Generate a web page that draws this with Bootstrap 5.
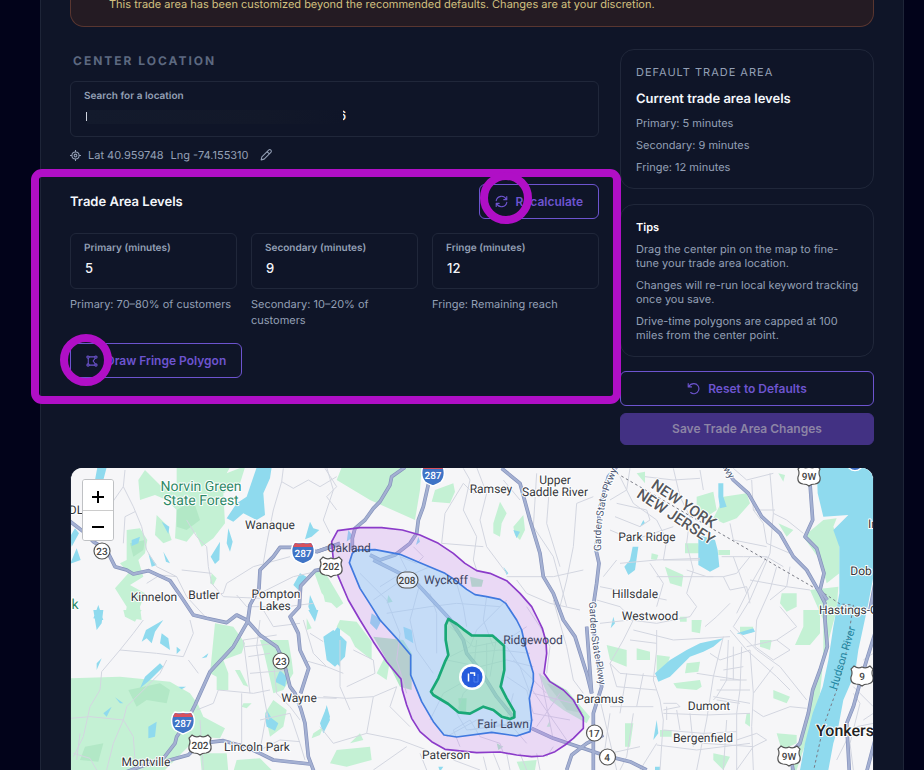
<!DOCTYPE html>
<html lang="en" data-bs-theme="dark">
<head>
<meta charset="utf-8">
<meta name="viewport" content="width=device-width, initial-scale=1">
<title>Trade Area Settings</title>
<link href="https://cdn.jsdelivr.net/npm/bootstrap@5.3.0/dist/css/bootstrap.min.css" rel="stylesheet">
<style>
:root{--panel:#0f1528;--line:#20273a;--muted:#94a0b6;--violet:#6d54cf;--mark-pink:#b00fc6}
body{background:#02031a;font-family:Inter,"Liberation Sans",sans-serif;font-size:11px;line-height:14px;color:var(--muted);text-rendering:geometricPrecision}
.shell{margin:0 20px 0 40px;background:var(--panel);border:solid #1e2538;border-width:0 1px;padding:0 29px}
.notice{background:#241b23;border:1px solid #593630;border-top:0;border-radius:0 0 14px 14px;color:#d3c180;padding:0 38px 17px;font-weight:400;line-height:9px}
.layout{display:grid;grid-template-columns:minmax(0,1fr) 254px;column-gap:21px;padding-top:22px;padding-bottom:23px}
.eyebrow{font-size:12px;line-height:14px;font-weight:700;letter-spacing:2px;color:#5d6980;margin:5px 0 13px 3px}
.field{border:1px solid var(--line);border-radius:6px;padding:7px 13px 0;height:56px}
.field label{display:block;font-size:10px;line-height:14px;font-weight:600}
.field input{font-size:13px;line-height:18px;font-weight:500;color:#f3f5fa;padding:0 0 0 1px;height:18px;margin-top:4px;min-height:0;border:0;background:none}
.field input:focus{outline:1px solid var(--violet)}
.masked{position:relative}
.smudge{position:absolute;left:2px;top:3px;width:257px;height:14px;border-left:1px solid #cfd4df;border-image:linear-gradient(transparent 20%,#cfd4df 20%,#cfd4df 75%,transparent 75%) 1;background:linear-gradient(90deg,#131a2c,#121829 70%,var(--panel));z-index:1}
.remnant{position:absolute;left:254px;top:0;font-size:13px;line-height:18px;font-weight:500;color:#f3f5fa}
.coords{margin:11px 0 22px;gap:7px}
.levels{position:relative}
.heading{font-size:13px;line-height:16px;font-weight:600;color:#f4f6fb}
.btn-violet{--bs-btn-color:var(--violet);--bs-btn-border-color:var(--violet);--bs-btn-hover-bg:#1d1a45;--bs-btn-hover-color:#8d78e6;--bs-btn-hover-border-color:#8d78e6;--bs-btn-font-size:12px;--bs-btn-font-weight:600;--bs-btn-line-height:19px;--bs-btn-padding-y:7px;--bs-btn-padding-x:15px;--bs-btn-border-radius:6px;display:inline-flex;align-items:center;justify-content:center;position:relative}
.btn-save{--bs-btn-disabled-bg:#423183;--bs-btn-disabled-color:#8c84a5;--bs-btn-disabled-border-color:#423183;--bs-btn-disabled-opacity:1;--bs-btn-font-size:12px;--bs-btn-font-weight:600;--bs-btn-line-height:18px;--bs-btn-padding-y:6px;--bs-btn-border-radius:6px}
.reset{margin:14px 0 7px}
.fields{display:grid;grid-template-columns:repeat(3,minmax(0,1fr));gap:14px;margin:14px 0 15px}
.hint{line-height:16px;margin:7px 0 0}
.ring-box{position:absolute;inset:-15px -22px -26px -39px;border:8px solid var(--mark-pink);border-radius:11px;pointer-events:none;z-index:2}
.ring-dot{position:absolute;width:52px;height:52px;border:8px solid var(--mark-pink);border-radius:50%;left:0;top:-13px;pointer-events:none;z-index:3}
.ring-draw{left:-11px;top:-10px}
.side{border:1px solid var(--line);border-radius:14px;padding:15px 12px 14px 15px}
.side+.side{margin-top:15px}
.side p{margin:0 0 8px}
.side .heading{margin-bottom:9px}
.side p:last-child{margin:0}
.side .over{letter-spacing:1px;margin-bottom:12px}
.map{height:302px;border-radius:12px 12px 0 0;overflow:hidden;background:#f6f6f8;position:relative;border:solid #1b2234;border-width:0 1px}
.map svg.canvas{display:block;width:100%;height:100%}
.zoomer{position:absolute;left:11px;top:11px;border:1px solid #bfc1c4;border-radius:3px;overflow:hidden}
.zoomer button{display:block;width:30px;height:30px;border:0;background:#fff;color:#000;padding:0}
.zoomer button+button{border-top:1px solid #ccc}
.park{fill:#c4f1d4}.park2{fill:#b2e8c6}.lake{fill:#8fdaee}
.minor{fill:none;stroke:#d3d6e0;stroke-width:3}
.casing{fill:none;stroke:#8592bb;stroke-width:11;stroke-linejoin:round}
.fillway{fill:none;stroke:#a4b0d2;stroke-width:7;stroke-linejoin:round}
.place{font-family:Roboto,sans-serif;font-size:12px;fill:#34363b;paint-order:stroke;stroke:#fff;stroke-width:2px;stroke-linejoin:round;text-anchor:middle}
.place .wood{fill:#2f8a68;font-size:14px}
.place .state{font-size:15px;font-weight:500;fill:#55575c}
.place .road{font-size:10px;fill:#4d5874;text-anchor:start}
.place .river{font-size:11px;fill:#2387a3;stroke:none}
.place .city{font-size:16px;font-weight:500;fill:#222}
.place .in{stroke:none;fill:#3d4360}
.num{font-family:Roboto,sans-serif;font-size:10px;font-weight:500;fill:#444;text-anchor:middle}
</style>
<script src="https://cdn.jsdelivr.net/npm/bootstrap@5.3.0/dist/js/bootstrap.bundle.min.js"></script>
</head>
<body>
<main class="shell">
  <div class="notice" role="status">This trade area has been customized beyond the recommended defaults. Changes are at your discretion.</div>

  <div class="layout">
    <section>
      <h2 class="eyebrow">CENTER LOCATION</h2>
      <div class="field">
        <label for="loc">Search for a location</label>
        <div class="masked"><input id="loc" class="form-control" type="text"><span class="remnant">6</span><span class="smudge"></span></div>
      </div>
      <div class="coords d-flex align-items-center">
        <svg width="11" height="11" viewBox="0 0 16 16" fill="none" stroke="currentColor" stroke-width="1.5"><circle cx="8" cy="8" r="5.2"/><circle cx="8" cy="8" r="2"/><path d="M8 0v3M8 13v3M0 8h3M13 8h3"/></svg>
        <span>Lat 40.959748</span><span>Lng -74.155310</span>
        <svg class="ms-1" width="12" height="12" viewBox="0 0 16 16" fill="none" stroke="currentColor" stroke-width="1.4" stroke-linejoin="round"><path d="M1.5 14.5l1-4L11.500 1.500a1.800 1.800 0 0 1 3 3L5.500 13.500zM9.500 3.500l3 3"/></svg>
      </div>

      <div class="levels">
        <div class="d-flex justify-content-between align-items-center">
          <h3 class="heading m-0">Trade Area Levels</h3>
          <button class="btn btn-violet gap-2" type="button">
            <svg width="13" height="13" viewBox="0 0 16 16" fill="none" stroke="currentColor" stroke-width="1.400" stroke-linecap="round" stroke-linejoin="round"><path d="M1.500 7A6.600 6.600 0 0 1 14 5.500M14.500 9A6.600 6.600 0 0 1 2 10.500M14.500 2v3.700h-3.700M1.500 14v-3.700h3.700"/></svg>
            Recalculate<span class="ring-dot"></span></button>
        </div>
        <div class="fields">
          <div><div class="field"><label for="p1">Primary (minutes)</label><input id="p1" class="form-control" type="text" value="5"></div><p class="hint">Primary: 70–80% of customers</p></div>
          <div><div class="field"><label for="p2">Secondary (minutes)</label><input id="p2" class="form-control" type="text" value="9"></div><p class="hint">Secondary: 10–20% of customers</p></div>
          <div><div class="field"><label for="p3">Fringe (minutes)</label><input id="p3" class="form-control" type="text" value="12"></div><p class="hint">Fringe: Remaining reach</p></div>
        </div>
        <button class="btn btn-violet gap-2" type="button">
          <svg width="12" height="12" viewBox="0 0 16 16" fill="none" stroke="currentColor" stroke-width="1.400"><path d="M3 4v8M4 2.500h8M4 13.500h8M12.500 4L9.500 8l3 4"/><circle cx="2.700" cy="2.700" r="1.500"/><circle cx="13.300" cy="2.700" r="1.500"/><circle cx="2.700" cy="13.300" r="1.500"/><circle cx="13.300" cy="13.300" r="1.500"/></svg>
          Draw Fringe Polygon<span class="ring-dot ring-draw"></span></button>
        <div class="ring-box"></div>
      </div>
    </section>

    <aside>
      <div class="side">
        <p class="over">DEFAULT TRADE AREA</p>
        <h3 class="heading">Current trade area levels</h3>
        <p>Primary: 5 minutes</p><p>Secondary: 9 minutes</p><p>Fringe: 12 minutes</p>
      </div>
      <div class="side">
        <p class="text-white fw-semibold">Tips</p>
        <p>Drag the center pin on the map to fine-tune your trade area location.</p>
        <p>Changes will re-run local keyword tracking once you save.</p>
        <p>Drive-time polygons are capped at 100 miles from the center point.</p>
      </div>
      <button class="btn btn-violet reset w-100 gap-2" type="button">
        <svg width="13" height="13" viewBox="0 0 16 16" fill="none" stroke="currentColor" stroke-width="1.400" stroke-linecap="round" stroke-linejoin="round"><path d="M1.500 2v4h4M1.800 5.800C3.500 3.200 6 2 8.500 2a6.200 6.200 0 1 1-4 11"/></svg>
        Reset to Defaults</button>
      <button class="btn btn-save w-100" type="button" disabled>Save Trade Area Changes</button>
    </aside>
  </div>

  <div class="map">
    <svg class="canvas" viewBox="71 468 802 302" preserveAspectRatio="xMinYMin slice" role="img" aria-label="Drive-time map of the trade area">
      <defs>
        <g id="ways">
          <g transform="translate(60 460) scale(.33333)">
            <path d="M25 180L70 215 100 245 140 270 165 320 200 330 220 342 265 332 330 362 360 405 400 465 440 475 500 488 530 465 560 480 600 525 650 560 670 600 690 680 705 700 722 745 735 790 745 890 762 935"/>
            <path d="M840 250L770 275 720 262 660 262 640 290 600 330 597 385 570 435 563 485 520 560 450 635 405 735 380 785 350 830 345 850 310 895 200 935"/>
            <path d="M800 325L765 332 722 378 718 440 690 470 715 520 720 570 746 625 722 700"/>
            <path d="M440 848L490 842 560 862 600 880 640 900 750 912M250 915L330 900 385 885 400 870"/>
          </g>
          <g transform="translate(320 460) scale(.33333)">
            <path d="M255 22L215 50 210 75 180 125 160 145 135 180 105 205 97 235 97 270M-10 275L50 255"/>
            <path d="M328 60L310 140 295 180 290 220 270 250 225 285 180 300 150 285M160 300L240 340 290 370 390 478 430 540 440 580 480 630 530 710 583 775M635 805L700 835 760 855 850 885"/>
            <path d="M545 25L600 70 630 180 660 280 670 350 700 400 730 480 765 530 800 640 815 700"/>
            <path d="M740 930L755 885 800 850 850 825"/>
          </g>
          <g transform="translate(590 460) scale(.33333)">
            <path d="M80 20L55 50 30 140 18 270 27 310 20 370 8 450 15 550 30 640 35 680 10 760 10 930M-10 500L5 700M60 890L120 905 170 930"/>
            <path d="M400 15L430 60 475 100 515 170 570 220 610 290 650 330 690 400 705 430 705 480 712 560 690 630 668 690 655 760 630 850 600 880 610 935"/>
            <path d="M660 70L668 180 645 230 680 265 702 340 690 390 712 420"/>
            <path d="M855 520L830 600 815 650 790 740 770 790 778 935M855 840L830 935M855 370L840 450"/>
          </g>
        </g>
        <g id="interstate"><path d="M-8 -10C-4 -9-3 -9 0 -10C3 -9 4 -9 8 -10C13 -5 12 4 8 8C5 10 2 11 0 12C-2 11-5 10-8 8C-12 4-13 -5-8 -10Z" fill="#3f74c6" stroke="#fff" stroke-width="1.500"/><path d="M-8 -9C-4 -8-3 -8 0 -9C3 -8 4 -8 8 -9L10 -5H-10Z" fill="#d8525e"/></g>
        <path id="usroute" d="M-8 -10Q-4 -7 0 -9Q4 -7 8 -10L11 -7Q9 -3 11 1Q12 7 6 8Q2 8 0 10Q-2 8-6 8Q-12 7-11 1Q-9 -3-11 -7Z" fill="#fff" stroke="#555" stroke-width="1.200"/>
        <path id="gsp1" d="M601 551L601 530 606 498 617 470"/>
        <path id="gsp2" d="M589 602L591 635 600 690"/>
      </defs>
      <rect x="71" y="468" width="802" height="302" fill="#f6f6f8"/>

      <g transform="translate(60 460) scale(.33333)">
        <path class="park" d="M235 60L255 30 300 75 350 90 350 22H555L540 70 490 100 495 190 460 235 425 260 405 215 380 245 345 235 350 150 320 120 285 105 240 120ZM545 22H510L500 40ZM290 165L320 195 335 240 310 250 285 225ZM200 210L240 205 262 240 255 280 235 300 250 350 210 375 255 400 240 440 245 480 195 470 200 440 165 385 205 340 180 310 200 300ZM455 340L470 355 460 375 450 370ZM760 330L800 345 850 430 830 445 785 400ZM190 450H245L225 485 195 470ZM30 655L180 650 330 665 390 700 415 735 430 770 495 805 480 835 415 830 380 865 310 935H30ZM465 490L520 500 555 550 545 580 490 600 505 640 505 690 470 690 470 650 450 640ZM525 630L540 630 565 680 550 675ZM600 540L685 540 695 600 700 640 670 690 640 700 610 570ZM550 730L575 730 560 745 545 740ZM640 720L680 750 670 800 630 830 615 760ZM760 820L790 800 780 825 755 835ZM420 880L500 880 505 935H425ZM530 900L600 895 640 935H520ZM740 475L755 505 740 510Z"/>
        <path class="park2" d="M350 150L400 120 420 180 380 210 350 200ZM210 250L255 240 250 270 220 290ZM205 690L300 670 330 690 320 730 260 720 230 740ZM75 860L130 850 115 905 60 900Z"/>
        <path class="lake" d="M112 22H140L130 60 105 60ZM590 22H635L630 55 610 100 615 165 590 180 550 160 520 185 500 175 530 130 560 110ZM750 185L760 205 778 210 755 230 735 238ZM480 245L478 300 465 312 452 290ZM505 205L518 245 510 275 500 250ZM305 185L328 200 325 222ZM215 240L240 230 235 250 215 258ZM265 280L290 315 275 320ZM310 275L330 310 318 305ZM45 205L57 220 35 260 30 230ZM50 265L62 300 30 312ZM115 435L130 480 100 475ZM750 405L770 450 760 475 745 440ZM720 340L740 350 715 390 700 375ZM100 450H130L125 490 110 510ZM310 480L285 515 275 550 260 535 245 545 258 510ZM305 520L325 535 330 570 300 550ZM125 595L110 630 110 610ZM300 610L310 620 270 660 240 685 255 650ZM350 560L362 570 350 582ZM355 680L378 680 365 688ZM155 740L140 770 130 760ZM290 785L285 830 265 835 265 800ZM165 712L190 730 180 730ZM660 630L680 650 675 680 645 665ZM620 750L635 775 655 790 645 812 620 800 615 770ZM800 735L810 770 795 800 785 800ZM840 490V620L800 580 805 540ZM745 450H775L765 485ZM425 595L445 580 440 592Z"/>
        <path class="minor" d="M195 30L190 80 220 140 245 200 260 270 290 320 350 350 380 410 440 475M190 80L155 130 120 180 110 240M190 250L195 170 225 155M380 180L410 230 440 260 445 320 455 370 490 410 600 415M670 25L665 65 700 85 745 60 780 80 830 50M665 65L640 150 620 250 610 310M795 25L830 80 800 110 830 150M350 350L300 345 260 370M455 340L365 330M390 410L490 400 500 370 580 320 690 290M600 400L700 350 790 330M530 405L560 440 680 440 760 430M250 480L220 520 180 570 125 635 120 690 90 740 70 830 40 890M180 570L290 580 370 590 400 520 390 480M190 780L200 740 250 690 300 640 320 600M30 775L90 770 190 780 220 830 225 900 250 930M190 780L160 850 140 930M40 880L90 895 110 930M410 750L460 730 475 690 580 700 630 690M550 540L570 700M550 540L650 525M565 590L630 580M555 560L650 550M570 640L690 630M600 480L590 560 610 700 625 780M640 600L650 700 690 740 720 780M545 700L545 850 510 860M420 780L430 930M415 640L385 600M600 780L690 760 720 850 735 900M730 600L800 620 850 640M730 480L760 580 800 620M750 520L790 545M610 450L640 500 720 490M620 760L600 870 660 840 720 845M60 820L50 900M690 710L830 715"/>
      </g>

      <g transform="translate(320 460) scale(.33333)">
        <path class="park" d="M65 22H305L300 90 285 180 150 120 50 60ZM345 90L400 70 405 95 390 130 335 125ZM540 125L560 160 545 190 540 230 520 220 520 190ZM580 200L610 165 615 210 600 240 585 225ZM0 360L25 370 40 430 15 425ZM60 480L110 485 155 545 155 600 105 560 90 530 50 500ZM195 590L210 600 200 660 170 640ZM655 640L740 690 810 770 800 790 730 750 690 720ZM120 820L130 840 90 850ZM50 870L150 860 155 900 80 920 30 910ZM690 780L680 800 690 800ZM590 905L650 900 645 930 600 930Z"/>
        <path class="park2" d="M450 350L490 360 485 380 455 380ZM160 530L250 540 275 580 275 690 240 680 200 600ZM205 405L218 425 200 430ZM415 715L440 715 438 755 418 755ZM530 850L550 860 535 870ZM680 670L740 690 790 760 740 750Z"/>
        <path class="lake" d="M85 210L100 230 80 245ZM580 210L600 215 590 235ZM295 230L288 255 300 245ZM10 530L40 510 65 530 80 545 75 590 45 620 20 600ZM155 460L185 480 170 510 150 490ZM250 500L275 510 280 550 255 535ZM20 740L30 780 10 820 0 790ZM355 920L370 920 360 935ZM550 320L565 340 560 345Z"/>
        <path class="minor" d="M20 22L40 90 10 180 30 220M470 22L500 100 480 180 500 260 560 340M375 160L430 70 460 100 500 90M375 160L365 250 490 260M430 25L450 60 430 150 470 230 460 300 470 330M600 120L550 60M650 40L640 200 700 290 740 440M690 60L680 190 720 320M820 110L770 130 760 260 740 360 720 440M560 350L700 350 790 330M590 360L620 400 690 430 780 450M120 340L200 420 240 520 230 600 260 700M160 420L260 350 330 320M240 290L260 330 180 380M280 260L310 290 290 310 240 290M200 460L330 440 410 430 540 440M300 370L270 480 290 570 340 640M330 400L350 460 350 580M410 370L430 440 440 500M560 420L470 510 450 560 390 590M500 410L490 480 520 560M390 500L460 560 560 540 620 500M440 580L540 570 630 580M380 600L480 620 560 600 640 620M440 660L370 700 330 780M480 650L430 700 410 760 440 810 520 800 620 790M470 540L460 640M500 550L500 670M530 530L510 650M560 560L600 620 630 700M620 440L660 500 690 560 680 640M700 420L740 560 760 660 790 700M560 650L620 690 640 760 750 780M640 700L760 730M650 800L720 700M630 680L740 840M660 640L700 840M580 700L560 780 620 850M380 830L470 780 630 810M420 860L400 810 450 780 480 830 540 850 550 880M450 810L640 780M490 890L500 930M520 880L540 930M560 880L570 930M600 880L620 930M650 880L660 930M10 710L80 715 160 710 230 680M60 540L60 680 90 750M100 570L160 600 165 640 80 680M160 710L140 820 240 840 320 870M140 820L40 850 0 800M230 680L210 740 270 800M300 880L320 930M400 900L480 930M260 860L160 930M680 890L700 860M580 600L680 700"/>
      </g>

      <g transform="translate(590 460) scale(.33333)">
        <path class="park" d="M320 110L370 95 380 150 350 170 320 150ZM400 110L470 100 480 130 440 175 400 190 370 175 385 145ZM140 40L165 35 165 70ZM565 40L585 45 580 65ZM565 190L610 210 590 230ZM640 230L700 180 740 175 730 200 748 250 748 340 710 370 690 300ZM285 250L325 250 330 280 285 280ZM385 270H420V285H385ZM225 320L280 345 275 380 240 370ZM185 280L205 285 200 300 183 298ZM575 400L620 400 620 440 590 455 570 430ZM660 390L745 380 740 450 700 600 690 700 650 840 620 930 600 930 640 830 660 740 700 580 700 480ZM640 450H690L690 520 660 555 615 555 640 500ZM305 480L335 480 330 520 305 515ZM50 555L110 570 110 620 60 600ZM140 565L180 575 180 600 140 600ZM200 585L240 590 230 620 200 640ZM290 610L330 605 325 635 285 640ZM450 500L490 500 485 518 450 520ZM510 540L545 540 540 570 510 560ZM550 690L600 710 590 730 550 715ZM250 670L330 660 335 680 320 690 260 685ZM105 790L130 790 120 860 105 860ZM470 760H480V800L465 790ZM560 820L620 825 620 850 575 870ZM370 880L420 890 400 930 370 900ZM210 810H245V830H210ZM270 470H290V485H270Z"/>
        <path class="lake" d="M680 22H850V350L835 430 820 500 805 570 795 640 760 720 745 800 730 850 715 930H630L645 850 668 760 698 680 715 600 730 500 748 400V260L730 210 775 165 700 170 683 100ZM385 70H400V110L410 140 390 145 385 110ZM325 225L375 240 383 270 388 320 360 335 325 315ZM128 260L145 260 135 330 115 345 103 320 120 300ZM160 180L165 190 150 200ZM70 470L75 490 62 505ZM195 640L240 600 290 570 330 550 350 545 400 535 370 560 340 575 300 590 270 620 240 650 205 665ZM440 520L490 505 495 515 460 525ZM200 780L205 820 190 840ZM195 920H210V930H195Z"/>
        <path class="minor" d="M90 50L130 130 200 180M120 25L110 90 60 120M165 50L250 60 330 55M250 25L270 110 300 170M330 30L340 90M75 170L150 200 180 180 170 150 80 130M200 180L230 240 220 300 330 300M60 210L130 240 250 200M300 170L290 250 310 330M430 25L470 60 550 40M485 60L490 150 520 190 530 250 600 280M540 40L550 160 540 280 480 420 430 500M555 150L490 150M550 160L590 180 640 220M420 190L430 240 530 260M395 290L460 290 530 290 580 320M290 330L350 350 400 350 440 340 480 290M80 300L40 350M90 310L200 300 330 295M180 310L220 370 200 440M30 380L130 400 230 420M200 350L370 350M310 330L290 400 320 440 300 470M400 350L420 390 470 380 480 430M530 290L490 360 440 460M560 320L540 390 500 480M600 320L590 380 540 420M430 290L470 400M480 360L590 380 660 390M345 500L380 470 420 430M20 420L90 440 130 480 100 540 60 610 80 680M30 490L120 480 200 490 300 470M130 510L250 540 420 530M200 510L200 570 190 660 210 720 220 780 210 930M60 610L90 640 200 650M80 680L200 690M120 540L200 550M60 740L190 740M30 720L80 930M110 640L90 760M160 640L140 740M220 730H260L270 740 220 750M220 760L350 765 480 760M220 810L340 820 440 815M230 740L230 780M260 750L270 810M300 760L310 860M200 855L320 870 480 850M400 530L370 650 350 780 320 930M415 540L410 660 380 710 370 720M430 560V660M455 560L450 690 440 760 440 930M320 640L450 660M380 690L480 690M390 660H470M400 630L460 620M380 720L450 730M360 580L390 600 480 570M480 570L490 700 485 800 490 930M430 500L500 570 570 620 650 720M420 510L470 570 560 650 600 690M500 480L495 560 550 600 600 570 560 540 470 560M570 440L620 500 560 540M490 700L550 620M370 710L480 730M490 750L520 770 600 740 650 745M440 840L500 820 530 840 490 860 440 930M340 850L490 860M410 780L400 930M150 930L200 850M130 760L110 890 90 930M150 860L60 880M60 760L40 900M790 700L810 730 780 850 790 930M820 780L850 760M790 680L850 740M800 800L850 790M820 600L850 580M740 900L780 820"/>
        <path d="M80 40L710 405 750 432 790 435 780 500 765 600 740 690 700 800 670 935" fill="none" stroke="#787a85" stroke-width="3" stroke-dasharray="8 8"/>
        <circle cx="795" cy="8" r="24" fill="#3f6fc4" stroke="#fff" stroke-width="4"/>
      </g>

      <use href="#ways" class="casing"/><use href="#ways" class="fillway"/>

      <g transform="translate(320 460) scale(.33333)" stroke-linejoin="round">
        <path d="M53 212L120 203 185 203 247 210 300 225 355 250 400 280 435 310 470 332 510 340 560 362 600 400 635 440 655 480 667 505 678 545 680 580 672 640 690 665 730 690 760 720 790 772 790 805 760 835 735 855 705 875 670 888 635 890 590 885 540 876 470 878 375 868 335 845 300 815 275 775 260 735 247 690 243 657 200 605 160 545 120 480 85 420 55 350 40 300 35 245Z" fill="#c57ff0" fill-opacity=".24" stroke="#8b3bc9" stroke-width="5"/>
        <path d="M108 270L165 269 240 283 300 308 375 340 405 360 440 388 465 404 500 410 540 418 557 430 590 480 605 510 615 555 640 640 640 665 628 715 635 780 630 815 590 828 515 817 410 831 372 825 340 785 305 725 272 645 272 585 230 535 180 480 155 440 120 385 88 308 97 280Z" fill="#8fe2fb" fill-opacity=".4" stroke="#4079df" stroke-width="5"/>
        <path d="M385 477L410 492 430 508 455 526 518 527 552 557 553 630 542 680 560 715 583 755 583 772 570 777 545 770 520 750 490 740 450 761 415 757 385 732 340 705 333 695 355 655 375 605 385 585 377 540 377 495Z" fill="#86e88f" fill-opacity=".38" stroke="#19a877" stroke-width="8"/>
      </g>

      <use href="#interstate" x="433" y="474"/><use href="#interstate" x="303" y="552"/><use href="#interstate" x="183" y="722"/>
      <use href="#usroute" x="331" y="567"/><use href="#usroute" x="200" y="745"/><use href="#usroute" x="809" y="476"/><use href="#usroute" x="789" y="756"/><use href="#usroute" x="862" y="676"/>
      <g fill="#fff" stroke="#555" stroke-width="1.200"><circle cx="102" cy="551" r="8"/><circle cx="281" cy="661" r="8"/><rect x="397" y="572" width="21" height="16" rx="8" fill="#e3edfa"/><circle cx="594.500" cy="733" r="8"/><circle cx="607.500" cy="757" r="8"/></g>
      <g class="num">
        <g fill="#fff"><text x="433" y="479">287</text><text x="303" y="557">287</text><text x="183" y="727">287</text></g>
        <text x="331" y="570">202</text><text x="200" y="749">202</text><text x="809" y="480">9W</text><text x="789" y="760">9W</text><text x="862" y="680">9</text>
        <text x="102" y="555">23</text><text x="281" y="665">23</text><text x="407" y="584">208</text><text x="594" y="737">17</text><text x="607" y="761">4</text>
      </g>

      <g class="place">
        <text class="wood" x="201" y="491">Norvin Green</text><text class="wood" x="201" y="505">State Forest</text><text class="wood" x="75" y="609">k</text>
        <text x="76" y="514">DL</text><text x="270" y="529">Wanaque</text><text x="154" y="601">Kinnelon</text><text x="204" y="599">Butler</text>
        <text x="276" y="598">Pompton</text><text x="275" y="610">Lakes</text><text x="299" y="702">Wayne</text><text x="257" y="751">Lincoln Park</text><text x="146" y="766">Montville</text>
        <text class="in" x="349" y="552">Oakland</text><text class="in" x="446" y="584">Wyckoff</text><text class="in" x="533" y="644">Ridgewood</text><text class="in" x="503" y="728">Fair Lawn</text>
        <text x="446" y="759">Paterson</text><text x="491" y="493">Ramsey</text><text x="555" y="484">Upper</text><text x="555" y="496">Saddle River</text>
        <text x="647" y="541">Park Ridge</text><text x="635" y="598">Hillsdale</text><text x="650" y="620">Westwood</text><text x="600" y="703">Paramus</text><text x="709" y="710">Dumont</text><text x="703" y="742">Bergenfield</text>
        <text x="873" y="528">In</text><text x="861" y="575">Dob</text><text x="819" y="614" style="text-anchor:start">Hastings-O</text>
        <text class="city" x="845" y="736">Yonkers</text>
        <text class="state" transform="translate(681 508) rotate(34)">NEW YORK</text><text class="state" transform="translate(673 521) rotate(33)">NEW JERSEY</text>
        <text class="road"><textPath href="#gsp1">Garden State Pkwy</textPath></text><text class="road"><textPath href="#gsp2">Garden State Pkwy</textPath></text>
        <text class="road" transform="translate(723 469) rotate(58)">wy</text>
        <text class="river" transform="translate(846 659) rotate(-73)">Hudson River</text>
      </g>

      <circle cx="472" cy="677" r="13" fill="#fff"/><circle cx="472" cy="677" r="10.500" fill="#265bdc"/>
      <path d="M468.500 681.500V673.500M470 673H474.500V676" fill="none" stroke="#fff" stroke-width="1.500"/><path d="M474 677V682H478V674" fill="none" stroke="#4c80ee" stroke-width="1"/>
    </svg>
    <div class="zoomer">
      <button type="button" aria-label="Zoom in"><svg width="14" height="14" viewBox="0 0 14 14" stroke="#000" stroke-width="2"><path d="M1 8h12M7 2v12"/></svg></button>
      <button type="button" aria-label="Zoom out"><svg width="14" height="14" viewBox="0 0 14 14" stroke="#000" stroke-width="2"><path d="M1 8h12"/></svg></button>
    </div>
  </div>
</main>
</body>
</html>
